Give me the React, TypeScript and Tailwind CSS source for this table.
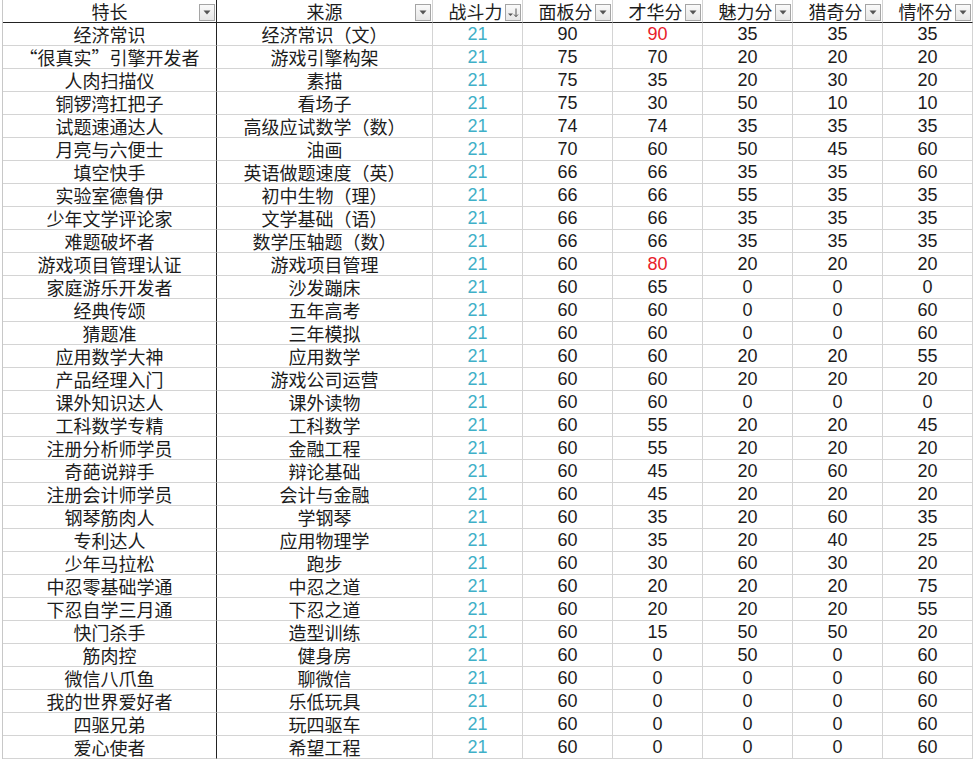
import React from 'react';

type Row = [string, string, number, number, number, number, number, number];

const headers = ['特长', '来源', '战斗力', '面板分', '才华分', '魅力分', '猎奇分', '情怀分'];

const rows: Row[] = [
  ['经济常识', '经济常识（文）', 21, 90, 90, 35, 35, 35],
  ['“很真实”引擎开发者', '游戏引擎构架', 21, 75, 70, 20, 20, 20],
  ['人肉扫描仪', '素描', 21, 75, 35, 20, 30, 20],
  ['铜锣湾扛把子', '看场子', 21, 75, 30, 50, 10, 10],
  ['试题速通达人', '高级应试数学（数）', 21, 74, 74, 35, 35, 35],
  ['月亮与六便士', '油画', 21, 70, 60, 50, 45, 60],
  ['填空快手', '英语做题速度（英）', 21, 66, 66, 35, 35, 60],
  ['实验室德鲁伊', '初中生物（理）', 21, 66, 66, 55, 35, 35],
  ['少年文学评论家', '文学基础（语）', 21, 66, 66, 35, 35, 35],
  ['难题破坏者', '数学压轴题（数）', 21, 66, 66, 35, 35, 35],
  ['游戏项目管理认证', '游戏项目管理', 21, 60, 80, 20, 20, 20],
  ['家庭游乐开发者', '沙发蹦床', 21, 60, 65, 0, 0, 0],
  ['经典传颂', '五年高考', 21, 60, 60, 0, 0, 60],
  ['猜题准', '三年模拟', 21, 60, 60, 0, 0, 60],
  ['应用数学大神', '应用数学', 21, 60, 60, 20, 20, 55],
  ['产品经理入门', '游戏公司运营', 21, 60, 60, 20, 20, 20],
  ['课外知识达人', '课外读物', 21, 60, 60, 0, 0, 0],
  ['工科数学专精', '工科数学', 21, 60, 55, 20, 20, 45],
  ['注册分析师学员', '金融工程', 21, 60, 55, 20, 20, 20],
  ['奇葩说辩手', '辩论基础', 21, 60, 45, 20, 60, 20],
  ['注册会计师学员', '会计与金融', 21, 60, 45, 20, 20, 20],
  ['钢琴筋肉人', '学钢琴', 21, 60, 35, 20, 60, 35],
  ['专利达人', '应用物理学', 21, 60, 35, 20, 40, 25],
  ['少年马拉松', '跑步', 21, 60, 30, 60, 30, 20],
  ['中忍零基础学通', '中忍之道', 21, 60, 20, 20, 20, 75],
  ['下忍自学三月通', '下忍之道', 21, 60, 20, 20, 20, 55],
  ['快门杀手', '造型训练', 21, 60, 15, 50, 50, 20],
  ['筋肉控', '健身房', 21, 60, 0, 50, 0, 60],
  ['微信八爪鱼', '聊微信', 21, 60, 0, 0, 0, 60],
  ['我的世界爱好者', '乐低玩具', 21, 60, 0, 0, 0, 60],
  ['四驱兄弟', '玩四驱车', 21, 60, 0, 0, 0, 60],
  ['爱心使者', '希望工程', 21, 60, 0, 0, 0, 60],
];

const CJK = '"Noto Sans CJK SC", "Liberation Sans", sans-serif';

// 才华分 cells highlighted red by conditional formatting
const isRed = (r: number, c: number) => c === 4 && rows[r][4] >= 80;

function FilterButton({ sorted }: { sorted?: boolean }) {
  return (
    <div className="absolute right-[1px] top-[4px] flex h-[17px] w-[16px] items-center justify-center border border-[#a5a5a5] bg-gradient-to-b from-[#fafafa] to-[#e6e6e6]">
      {sorted ? (
        <svg width="12" height="11" viewBox="0 0 12 11">
          <path d="M1 6.5h5L3.5 9z" fill="#555" />
          <path d="M9 1.5v8" stroke="#555" strokeWidth="1" />
          <path d="M7 7.5l2 2.2 2-2.2" stroke="#555" strokeWidth="1" fill="none" />
        </svg>
      ) : (
        <svg width="8" height="5" viewBox="0 0 8 5">
          <path d="M0.5 0.5h7L4 4.5z" fill="#555" />
        </svg>
      )}
    </div>
  );
}

export default function App() {
  const cell =
    'flex h-[23px] items-center justify-center border-b border-r border-[#d4d4d4] whitespace-nowrap';

  return (
    <div
      className="min-h-[761px] w-[976px] overflow-hidden bg-white pl-[2px] text-[18px] leading-[22px] text-[#1c1c1c]"
      style={{ fontFamily: '"Liberation Sans", "Noto Sans CJK SC", sans-serif' }}
    >
      <div className="grid grid-cols-[214px_216px_90px_90px_90px_90px_90px_90px] border-l border-[#c8c8c8]">
        {headers.map((h, i) => (
          <div
            key={h}
            className={`relative flex h-[23px] items-center justify-center border-b border-b-[#222] border-r ${
              i === 0 ? 'border-r-[#222]' : 'border-r-[#d4d4d4]'
            }`}
            style={{ fontFamily: CJK }}
          >
            <span className={i >= 2 ? 'pr-[4px]' : ''}>{h}</span>
            <FilterButton sorted={i === 2} />
          </div>
        ))}
        {rows.map((row, r) =>
          row.map((v, c) => (
            <div
              key={`${r}-${c}`}
              className={`${cell} ${c === 0 ? 'border-r-[#222]' : ''} ${
                c === 2 ? 'text-[#3fb0c8]' : isRed(r, c) ? 'text-[#e8202a]' : ''
              }`}
              style={c < 2 ? { fontFamily: CJK } : undefined}
            >
              {v}
            </div>
          ))
        )}
      </div>
    </div>
  );
}
